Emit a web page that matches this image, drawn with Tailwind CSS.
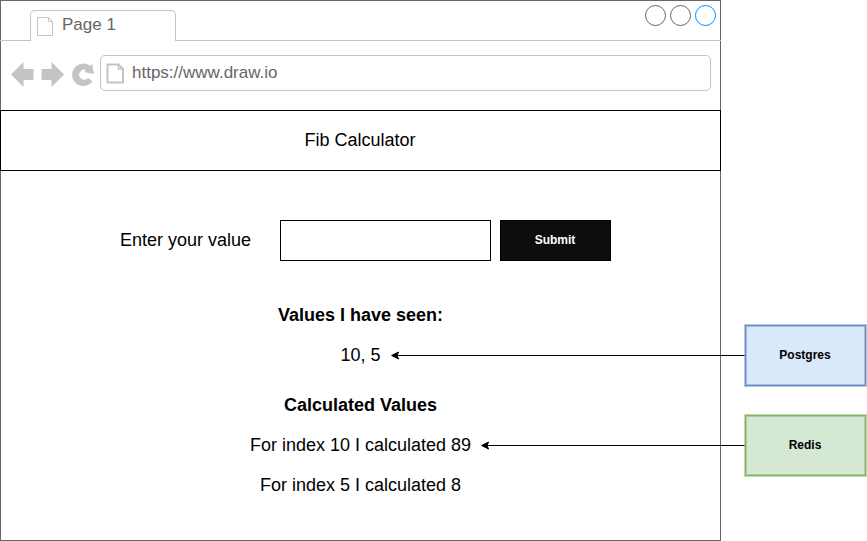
<!DOCTYPE html>
<html lang="en">
<head>
<meta charset="utf-8">
<title>Fib Calculator</title>
<script src="https://cdn.jsdelivr.net/npm/@tailwindcss/browser@4"></script>
</head>
<body class="relative flex h-[541px] w-[867px] overflow-hidden bg-white font-['Liberation_Sans',Arial,sans-serif] text-lg leading-[30px] text-black">
  <main class="flex h-[541px] w-[721px] shrink-0 flex-col border border-[#666]">
    <!-- Tab strip -->
    <div class="-mx-px flex h-10 shrink-0 items-end">
      <div class="h-px w-[30px] bg-[#c4c4c4]"></div>
      <div class="flex h-[31px] w-[146px] rounded-t-[5px] border border-b-0 border-[#c4c4c4] pl-1.5 text-[17px] text-[#666]">
        <svg class="mt-[6px] h-[19px] w-[16px] shrink-0" viewBox="0 0 16 19" fill="none" stroke="#c4c4c4"><path d="M.5 .5H11.5L15.5 4.5V18.5H.5ZM11.5 .5V4.5H15.5"/></svg>
        <span class="-mt-px ml-[9px]">Page 1</span>
      </div>
      <div class="relative h-full flex-1 border-b border-[#c4c4c4]">
        <svg class="absolute top-1 right-[4px] h-[22px] w-[72px]" viewBox="0 0 72 22" fill="none" stroke="#666"><circle cx="10.5" cy="10.5" r="10"/><circle cx="35.5" cy="10.5" r="10"/><circle cx="60.5" cy="10.5" r="10" stroke="#008cff"/></svg>
      </div>
    </div>
    <!-- Address bar -->
    <div class="flex h-[69px] shrink-0 pt-3.5 pl-[10px]">
      <svg class="h-[36px] w-[89px] shrink-0" viewBox="11 55 89 36" fill="#c4c4c4">
        <path d="M11 74.5L23.5 62V69H33.5V80H23.5V87Z"/>
        <path d="M64 74.5L51.5 62V69H41.5V80H51.5V87Z"/>
        <path d="M92.5 81.2A11.2 11.2 0 1 1 90 65.8L92.3 63.8L93.8 73.9L84.3 71.9L86.2 70.1A5 5 0 1 0 88 78Z"/>
      </svg>
      <div class="flex h-[36px] w-[611px] rounded-[5px] border border-[#c4c4c4] pl-[5px] text-[17px] text-[#666]">
        <svg class="mt-[7px] h-[21px] w-[19px] shrink-0" viewBox="0 0 19 21" fill="none" stroke="#c4c4c4" stroke-width="2"><path d="M1.5 1.5H12.5L17 6V19.5H1.5Z"/><path stroke-width="1.5" d="M12.5 1.5V6H17"/></svg>
        <span class="ml-[7px] mt-[2px]">https://www.draw.io</span>
      </div>
    </div>
    <header class="-mx-px flex h-[61px] shrink-0 items-center justify-center border border-black pr-px pb-px"><h1>Fib Calculator</h1></header>
    <form class="mt-[49px] flex h-[41px] shrink-0 items-start pl-[119px]">
      <label for="value" class="mt-[5px] w-[160px]">Enter your value</label>
      <input id="value" class="h-[41px] w-[211px] border border-black bg-white px-2 outline-none">
      <button type="button" class="ml-[9px] h-[41px] w-[111px] border border-black bg-[#0d0d0d] pr-px pb-px text-xs font-bold text-white">Submit</button>
    </form>
    <section class="mt-[39px] flex flex-col gap-2.5 text-center">
      <h2 class="font-bold">Values I have seen:</h2>
      <p>10, 5</p>
    </section>
    <section class="mt-5 flex flex-col gap-2.5 text-center">
      <h2 class="font-bold">Calculated Values</h2>
      <p>For index 10 I calculated 89</p>
      <p>For index 5 I calculated 8</p>
    </section>
  </main>
  <!-- Data stores -->
  <aside class="ml-[24px] flex flex-col gap-[29px] pt-[325px] text-xs font-bold">
    <div class="flex h-[61px] w-[121px] items-center justify-center border border-[#6c8ebf] bg-[#dae8fc] pr-px pb-px shadow-[0_0_0_1px_#b5c6df,inset_0_0_0_1px_#a3bbde]">Postgres</div>
    <div class="flex h-[61px] w-[121px] items-center justify-center border border-[#82b366] bg-[#d5e8d4] pr-px pb-px shadow-[0_0_0_1px_#c0d9b2,inset_0_0_0_1px_#accd9d]">Redis</div>
  </aside>
  <!-- Connectors drawn across the window edge -->
  <svg class="pointer-events-none absolute top-0 left-0 h-[541px] w-[867px]" viewBox="0 0 867 541" stroke="#000" stroke-miterlimit="10">
    <path d="M744.5 355.5H397M744.5 445.5H487"/>
    <path d="M391.6 355.5L398.6 352L396.9 355.5L398.6 359Z"/>
    <path d="M481.6 445.5L488.6 442L486.9 445.5L488.6 449Z"/>
  </svg>
</body>
</html>
